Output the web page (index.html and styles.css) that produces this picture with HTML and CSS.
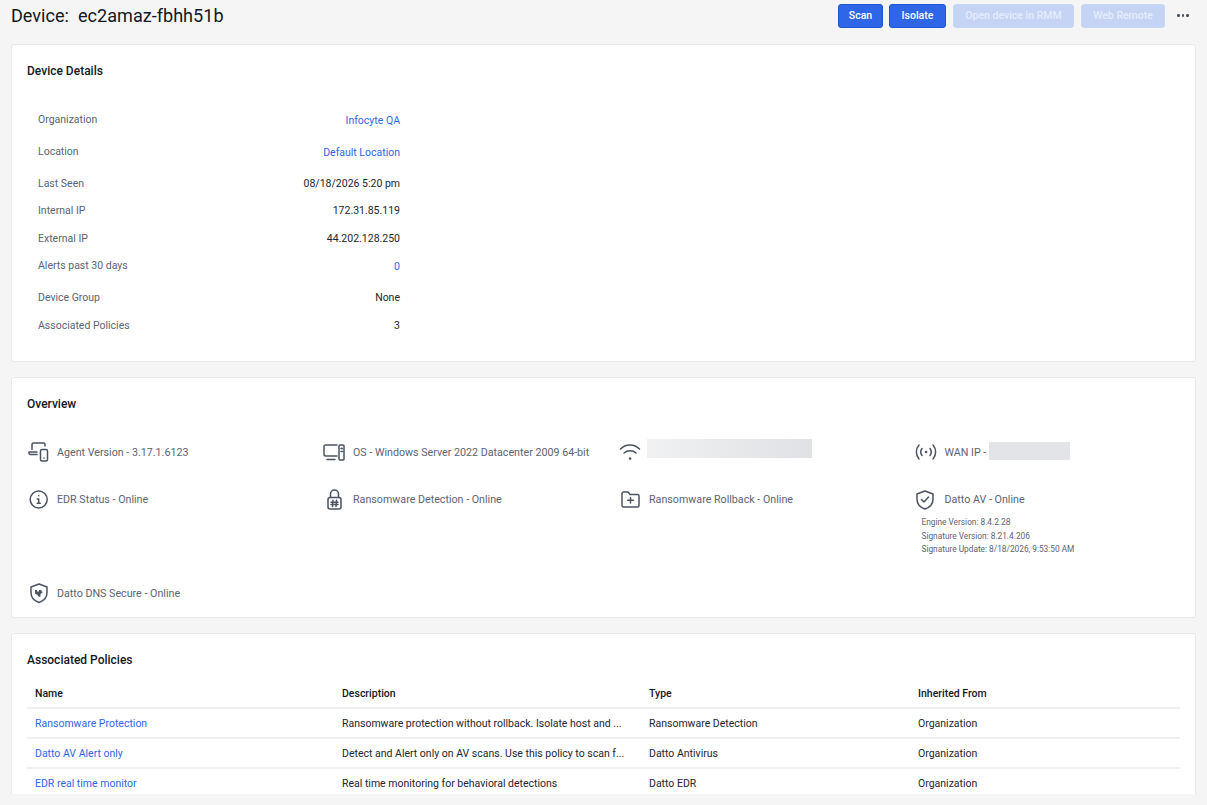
FILE: index.html
```html
<!DOCTYPE html>
<html lang="en">
<head>
    <meta charset="UTF-8">
    <meta name="viewport" content="width=device-width, initial-scale=1.0">
    <title>Device: ec2amaz-fbhh51b</title>
    <link rel="stylesheet" href="styles.css">
</head>
<body>
    <div class="page">
        <div class="page-header">
            <h1>Device:&nbsp; ec2amaz-fbhh51b</h1>
            <div class="actions">
                <button class="btn">Scan</button>
                <button class="btn btn-wide">Isolate</button>
                <button class="btn btn-disabled btn-rmm">Open device in RMM</button>
                <button class="btn btn-disabled btn-remote">Web Remote</button>
                <span class="more"><i></i><i></i><i></i></span>
            </div>
        </div>

        <section class="card card-details">
            <h2>Device Details</h2>
            <dl class="details">
                <div class="row row-link"><dt>Organization</dt><dd><a href="#">Infocyte QA</a></dd></div>
                <div class="row row-link"><dt>Location</dt><dd><a href="#">Default Location</a></dd></div>
                <div class="row row-short"><dt>Last Seen</dt><dd>08/18/2026 5:20 pm</dd></div>
                <div class="row row-short"><dt>Internal IP</dt><dd>172.31.85.119</dd></div>
                <div class="row row-short"><dt>External IP</dt><dd>44.202.128.250</dd></div>
                <div class="row row-link"><dt>Alerts past 30 days</dt><dd><a href="#">0</a></dd></div>
                <div class="row"><dt>Device Group</dt><dd>None</dd></div>
                <div class="row"><dt>Associated Policies</dt><dd>3</dd></div>
            </dl>
        </section>

        <section class="card card-overview">
            <h2>Overview</h2>
            <div class="overview">
                <div class="item">
                    <svg class="icon" viewBox="0 0 24 24"><path d="M5 9.500V4.500A1.500 1.500 0 0 1 6.500 3H16.500A1.500 1.500 0 0 1 18 4.500V6"/><path d="M2 12H10M2 12V13A1.500 1.500 0 0 0 3.500 14.500H10"/><rect x="13.500" y="9.500" width="7" height="11.500" rx="1.500"/><path d="M17 18H17.100"/></svg>
                    <span>Agent Version - 3.17.1.6123</span>
                </div>
                <div class="item">
                    <svg class="icon" viewBox="0 0 24 24"><path d="M14 5H2.500A1.500 1.500 0 0 0 1 6.500V14.500A1.500 1.500 0 0 0 2.500 16H14"/><path d="M4 19.500H12"/><rect x="16" y="5" width="5" height="15" rx="1"/><path d="M18 8.500H19.500M18 11.500H19.500"/></svg>
                    <span>OS - Windows Server 2022 Datacenter 2009 64-bit</span>
                </div>
                <div class="item">
                    <svg class="icon icon-wifi" viewBox="0 0 24 24"><path d="M1.500 9C6.500 3.500 15.500 3.500 20.500 9"/><path d="M5 13C8 10 14 10 17 13"/><path d="M11 18.500H11.100" class="dot"/></svg>
                    <span class="redacted redacted-wifi"></span>
                </div>
                <div class="item">
                    <svg class="icon" viewBox="0 0 24 24"><path d="M4 5C0.500 9 0.500 15 4 19M18 5C21.500 9 21.500 15 18 19"/><path d="M7 8.500C5.500 10.500 5.500 13.500 7 15.500M15 8.500C16.500 10.500 16.500 13.500 15 15.500"/><path d="M11 12H11.100" class="dot"/></svg>
                    <span>WAN IP -&nbsp;</span><span class="redacted redacted-wan"></span>
                </div>

                <div class="item">
                    <svg class="icon" viewBox="0 0 24 24"><circle cx="11.700" cy="12.500" r="8.500"/><path d="M11.700 8.800H11.800M10.300 12H11.700V16.200M10.200 16.200H13.200"/></svg>
                    <span>EDR Status - Online</span>
                </div>
                <div class="item">
                    <svg class="icon" viewBox="0 0 24 24"><rect x="5" y="10.500" width="13" height="11.500" rx="2"/><path d="M7.500 10.500V7A4 4 0 0 1 15.500 7V10.500"/><path d="M10 13.300L9.500 19.500M13.500 13.300L13 19.500M8 15.200H15M8 17.600H15"/></svg>
                    <span>Ransomware Detection - Online</span>
                </div>
                <div class="item">
                    <svg class="icon" viewBox="0 0 24 24"><path d="M3 6.500A1.500 1.500 0 0 1 4.500 5H9L11 7.500H18.500A1.500 1.500 0 0 1 20 9V18.500A1.500 1.500 0 0 1 18.500 20H4.500A1.500 1.500 0 0 1 3 18.500Z"/><path d="M11.500 10.500V16M8.700 13.200H14.300"/></svg>
                    <span>Ransomware Rollback - Online</span>
                </div>
                <div class="item-stack">
                    <div class="item">
                        <svg class="icon" viewBox="0 0 24 24"><path d="M10 4L18 7V12C18 17 14.500 20.500 10 22C5.500 20.500 2 17 2 12V7Z"/><path d="M6.500 12.500L9 15L13.500 10"/></svg>
                        <span>Datto AV - Online</span>
                    </div>
                    <div class="av-meta">
                        <p>Engine Version: 8.4.2.28</p>
                        <p>Signature Version: 8.21.4.206</p>
                        <p>Signature Update: 8/18/2026, 9:53:50 AM</p>
                    </div>
                </div>

                <div class="item">
                    <svg class="icon" viewBox="0 0 24 24"><path d="M12 3L20 6V11.500C20 16.500 16.500 20 12 21.500C7.500 20 4 16.500 4 11.500V6Z"/><path class="solid" d="M8 9H10V10.500H12V9H14.500V10.500L16 11L13.500 13V15.500L12 16L10.500 14L8 12.500Z"/></svg>
                    <span>Datto DNS Secure - Online</span>
                </div>
            </div>
        </section>

        <section class="card card-policies">
            <h2>Associated Policies</h2>
            <table class="policies">
                <thead>
                    <tr><th class="col-name">Name</th><th class="col-desc">Description</th><th class="col-type">Type</th><th>Inherited From</th></tr>
                </thead>
                <tbody>
                    <tr><td><a href="#">Ransomware Protection</a></td><td>Ransomware protection without rollback. Isolate host and ...</td><td>Ransomware Detection</td><td>Organization</td></tr>
                    <tr><td><a href="#">Datto AV Alert only</a></td><td>Detect and Alert only on AV scans. Use this policy to scan f...</td><td>Datto Antivirus</td><td>Organization</td></tr>
                    <tr><td><a href="#">EDR real time monitor</a></td><td>Real time monitoring for behavioral detections</td><td>Datto EDR</td><td>Organization</td></tr>
                </tbody>
            </table>
        </section>
    </div>
</body>
</html>
```

FILE: styles.css
```css
html, body {
    margin: 0;
    padding: 0;
    height: 805px;
    overflow: hidden;
    background-color: #f5f5f5;
}
body {
    font-family: Roboto, "Liberation Sans", sans-serif;
    font-size: 10.500px;
    color: #1c2530;
}
a {
    color: #2f66e8;
    text-decoration: none;
}
.page {
    height: 794px;
    overflow: hidden;
    padding: 0 11px;
}
.page-header {
    display: flex;
    justify-content: space-between;
    align-items: center;
    height: 31px;
    padding-bottom: 13px;
}
h1 {
    margin: 0;
    font-size: 18.100px;
    font-weight: 400;
    color: #11181f;
}
.actions {
    display: flex;
    align-items: center;
    gap: 7px;
    padding-right: 7px;
}
.btn {
    height: 24px;
    width: 45px;
    padding: 0;
    border: 1px solid #1d55d6;
    border-radius: 3px;
    background-color: #2f66e8;
    color: #fff;
    font-family: inherit;
    font-size: 10.500px;
    font-weight: 500;
}
.btn + .btn-wide {
    margin-left: -1px;
}
.btn-wide {
    width: 57px;
}
.btn-disabled {
    background-color: #c5d4f4;
    border-color: #c9d7f5;
    color: #e6ecfb;
}
.btn-rmm {
    width: 121px;
}
.btn-remote {
    width: 84px;
}
.more {
    display: flex;
    gap: 2px;
    margin-left: 5px;
    width: 12px;
}
.more i {
    width: 2.500px;
    height: 2.500px;
    border-radius: 50%;
    background-color: #4a5361;
}
.card {
    background-color: #fff;
    border: 1px solid #e8e8e8;
    border-radius: 3px;
    padding: 0 15px;
    margin-bottom: 15px;
}
.card-details {
    height: 316px;
}
.card-overview {
    height: 239px;
}
h2 {
    margin: 0;
    padding-top: 19px;
    font-size: 12px;
    line-height: 14px;
    font-weight: 500;
    color: #11181f;
}
.details {
    width: 362px;
    margin: 35px 0 0 11px;
}
.row {
    display: flex;
    justify-content: space-between;
    height: 28px;
    line-height: 14px;
}
.row-link {
    height: 32px;
}
.row-short {
    height: 27.400px;
}
dt {
    color: #5a6472;
}
dd {
    margin: 0;
}
.row-link dd {
    padding-top: 1px;
}
.overview {
    display: grid;
    grid-template-columns: 296px 296px 295.500px auto;
    grid-template-rows: 47px 94px auto;
    margin-top: 29px;
    font-size: 10.700px;
}
.item {
    display: flex;
    align-items: center;
    height: 24px;
    color: #5a6472;
}
.icon {
    flex: none;
    width: 24px;
    height: 24px;
    margin-right: 6px;
    fill: none;
    stroke: #4a5361;
    stroke-width: 1.500;
    stroke-linecap: round;
    stroke-linejoin: round;
}
.icon-wifi {
    margin-right: 4px;
}
.icon .dot {
    stroke-width: 2.500;
}
.icon .solid {
    fill: #4a5361;
    stroke: none;
}
.redacted {
    display: block;
    height: 18px;
    background-color: #e2e4e7;
}
.redacted-wifi {
    width: 165px;
    height: 19px;
    margin-top: -7px;
    background: linear-gradient(90deg, #f0f1f2, #dfe1e4);
}
.redacted-wan {
    width: 81px;
    margin-top: -2px;
}
.av-meta {
    margin: 5px 0 0 7px;
    color: #5a6472;
    font-size: 8.300px;
    line-height: 13.500px;
}
.av-meta p {
    margin: 0;
}
.policies {
    width: 1153px;
    margin-top: 12px;
    border-collapse: collapse;
    table-layout: fixed;
}
.col-name,
.col-desc {
    width: 291px;
}
.col-type {
    width: 253px;
}
.policies th,
.policies td {
    height: 28px;
    padding: 0 8px;
    text-align: left;
    white-space: nowrap;
    border-bottom: 2px solid #f0f0f0;
}
.policies th {
    font-weight: 500;
    color: #11181f;
}
```
